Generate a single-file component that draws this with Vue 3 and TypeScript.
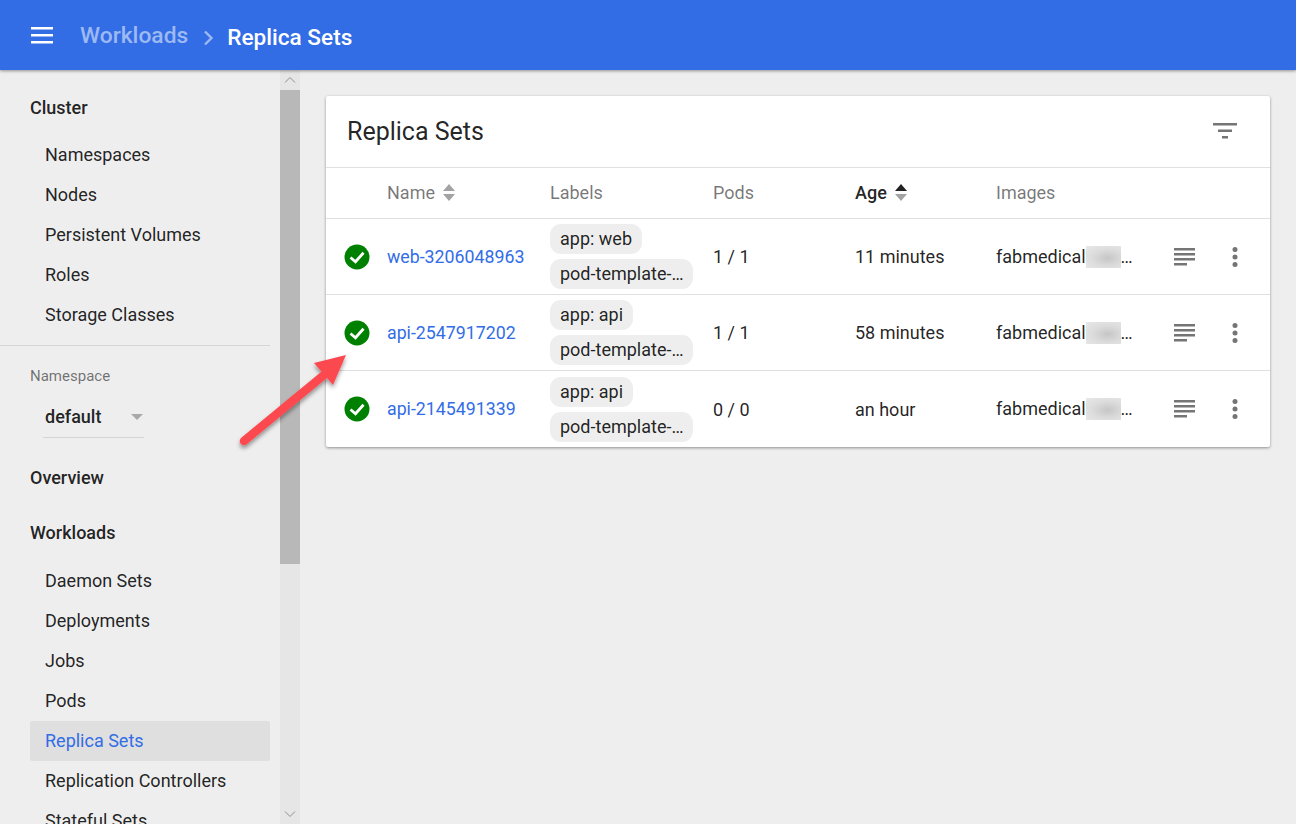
<script setup lang="ts">
interface Row {
  name: string
  labels: string[]
  pods: string
  age: string
}

const clusterItems = ['Namespaces', 'Nodes', 'Persistent Volumes', 'Roles', 'Storage Classes']
const workloadItems = ['Daemon Sets', 'Deployments', 'Jobs', 'Pods', 'Replica Sets', 'Replication Controllers', 'Stateful Sets']

const rows: Row[] = [
  { name: 'web-3206048963', labels: ['app: web', 'pod-template-…'], pods: '1 / 1', age: '11 minutes' },
  { name: 'api-2547917202', labels: ['app: api', 'pod-template-…'], pods: '1 / 1', age: '58 minutes' },
  { name: 'api-2145491339', labels: ['app: api', 'pod-template-…'], pods: '0 / 0', age: 'an hour' },
]
</script>

<template>
  <div class="page">
    <header class="toolbar">
      <svg class="menu" width="24" height="24" viewBox="0 0 24 24"><path d="M1 4h22v2.500H1zM1 11h22v2.500H1zM1 18h22v2.500H1z" fill="#fff" /></svg>
      <span class="crumb">Workloads</span>
      <svg class="chevron" width="14" height="18" viewBox="0 0 14 18"><path d="M3 2.500l6.500 6.500L3 15.500" fill="none" stroke="#9db9f2" stroke-width="2.400" /></svg>
      <span class="current">Replica Sets</span>
    </header>

    <div class="body">
      <aside class="side">
        <nav class="nav">
          <div class="group first">Cluster</div>
          <a v-for="item in clusterItems" :key="item" class="item">{{ item }}</a>
          <div class="rule"></div>
          <div class="ns-label">Namespace</div>
          <div class="ns-select">
            <span>default</span>
            <i class="caret"></i>
          </div>
          <div class="group overview">Overview</div>
          <div class="group workloads">Workloads</div>
          <a v-for="item in workloadItems" :key="item" class="item" :class="{ active: item === 'Replica Sets' }">{{ item }}</a>
        </nav>
        <div class="scrollbar">
          <button class="arrow-btn">
            <svg width="12" height="8" viewBox="0 0 12 8"><path d="M1 6.500l5-5 5 5" fill="none" stroke="#8f8f8f" stroke-width="1" /></svg>
          </button>
          <div class="track"><div class="thumb"></div></div>
          <button class="arrow-btn">
            <svg width="12" height="8" viewBox="0 0 12 8"><path d="M1 1.500l5 5 5-5" fill="none" stroke="#8f8f8f" stroke-width="1" /></svg>
          </button>
        </div>
      </aside>

      <main class="main">
        <section class="card">
          <div class="card-head">
            <h2>Replica Sets</h2>
            <svg class="filter" width="24" height="24" viewBox="0 0 24 24"><path d="M0 3h24v2.500H0zM5 9.500h14V12H5zM9 16h6v2.500H9z" fill="#757575" /></svg>
          </div>

          <div class="grid-row heading">
            <span></span>
            <span class="th">Name <i class="sort"><b></b><b></b></i></span>
            <span class="th">Labels</span>
            <span class="th">Pods</span>
            <span class="th on">Age <i class="sort desc"><b></b><b></b></i></span>
            <span class="th">Images</span>
          </div>

          <div v-for="row in rows" :key="row.name" class="grid-row line">
            <span class="status">
              <svg width="26" height="26" viewBox="0 0 26 26"><circle cx="13" cy="13" r="12.500" fill="#008000" /><path d="M6.500 13.500l5 4.300L19.500 8.800" fill="none" stroke="#fff" stroke-width="2.800" /></svg>
            </span>
            <a class="name">{{ row.name }}</a>
            <span class="chips">
              <span v-for="label in row.labels" :key="label" class="chip">{{ label }}</span>
            </span>
            <span>{{ row.pods }}</span>
            <span>{{ row.age }}</span>
            <span class="image">fabmedical<i class="smudge"></i>…</span>
            <svg class="act" width="22" height="20" viewBox="0 0 22 20"><path d="M0 1h21v2.500H0zM0 6h21v2.500H0zM0 11h21v2.500H0zM0 16h13v2.500H0z" fill="#757575" /></svg>
            <svg class="act" width="6" height="20" viewBox="0 0 6 20"><circle cx="3" cy="2.500" r="2.500" fill="#757575" /><circle cx="3" cy="10" r="2.500" fill="#757575" /><circle cx="3" cy="17.500" r="2.500" fill="#757575" /></svg>
          </div>
        </section>
      </main>
    </div>

    <svg class="pointer" width="130" height="115" viewBox="0 0 130 115">
      <defs>
        <filter id="arrow-shadow" x="-20%" y="-20%" width="140%" height="140%">
          <feDropShadow dx="0" dy="3" stdDeviation="2" flood-color="#000" flood-opacity="0.4" />
        </filter>
      </defs>
      <g filter="url(#arrow-shadow)">
        <path d="M14 101L94 35" stroke="#fb4a50" stroke-width="8.500" stroke-linecap="round" fill="none" />
        <path d="M116 15L84 23L103 45z" fill="#fb4a50" />
      </g>
    </svg>
  </div>
</template>

<style>
html, body {
  margin: 0;
  overflow: hidden;
}
</style>

<style scoped>
.page {
  position: relative;
  width: 1296px;
  height: 824px;
  overflow: hidden;
  background: #eeeeee;
  font-family: Roboto, "Liberation Sans", sans-serif;
  font-size: 18px;
  color: rgba(0, 0, 0, 0.87);
}

.toolbar {
  position: relative;
  z-index: 2;
  height: 70px;
  display: flex;
  align-items: center;
  padding-left: 30px;
  background: #326de6;
  color: #fff;
  box-shadow: 0 1px 3px rgba(0, 0, 0, 0.4);
  box-sizing: border-box;
}

.menu {
  margin-right: 26px;
}

.crumb {
  font-size: 22.800px;
  font-weight: 500;
  color: #9db9f2;
  position: relative;
}

.chevron {
  margin: 6px 11px 0 14px;
}

.current {
  font-size: 22.600px;
  font-weight: 500;
  position: relative;
  top: 2px;
}

.body {
  display: flex;
  height: 754px;
}

.side {
  width: 300px;
  flex: none;
  display: flex;
  overflow: hidden;
}

.nav {
  width: 280px;
  flex: none;
  height: 754px;
  overflow: hidden;
}

.group {
  font-weight: 500;
  padding-left: 30px;
  line-height: 24px;
}

.group.first {
  margin-top: 26px;
  margin-bottom: 15px;
}

.group.overview {
  margin-top: 28px;
}

.group.workloads {
  margin-top: 31px;
  margin-bottom: 16px;
}

.item {
  display: block;
  height: 40px;
  line-height: 40px;
  margin: 0 10px 0 30px;
  padding-left: 15px;
  border-radius: 2px;
}

.item.active {
  background: #dfdfdf;
  color: #326de6;
}

.rule {
  height: 1px;
  margin: 10px 10px 0 0;
  background: #d6d6d6;
}

.ns-label {
  margin: 20px 0 0 30px;
  font-size: 15px;
  line-height: 20px;
  color: rgba(0, 0, 0, 0.54);
}

.ns-select {
  display: flex;
  align-items: center;
  justify-content: space-between;
  width: 101px;
  height: 42px;
  margin: 10px 0 0 43px;
  padding: 0 0 0 2px;
  box-sizing: border-box;
  font-weight: 500;
  border-bottom: 1px solid #d4d4d4;
}

.caret {
  width: 0;
  height: 0;
  margin-right: 1px;
  border-left: 6px solid transparent;
  border-right: 6px solid transparent;
  border-top: 6px solid #a8a8a8;
}

.scrollbar {
  width: 20px;
  flex: none;
  display: flex;
  flex-direction: column;
  background: #e6e6e6;
}

.arrow-btn {
  height: 20px;
  flex: none;
  padding: 0;
  border: 0;
  background: transparent;
  display: flex;
  align-items: center;
  justify-content: center;
}

.track {
  flex: 1;
}

.thumb {
  height: 474px;
  background: #b8b8b8;
}

.main {
  flex: 1;
  min-width: 0;
  padding: 26px 26px 0;
}

.card {
  width: 944px;
  background: #fff;
  border-radius: 2px;
  box-shadow: 0 1px 3px rgba(0, 0, 0, 0.4);
}

.card-head {
  height: 72px;
  display: flex;
  align-items: center;
  justify-content: space-between;
  padding: 0 33px 0 21px;
  box-sizing: border-box;
  border-bottom: 1px solid #e0e0e0;
}

h2 {
  margin: 0;
  font-size: 25px;
  font-weight: 400;
  color: rgba(0, 0, 0, 0.87);
}

.grid-row {
  display: grid;
  grid-template-columns: 61px 163px 163px 142px 141px 164px 50px 50px;
  align-items: center;
  box-sizing: border-box;
  border-bottom: 1px solid #e0e0e0;
}

.heading {
  height: 51px;
  padding-bottom: 2px;
}

.line {
  height: 76px;
}

.line:last-child {
  border-bottom: 0;
}

.th {
  color: rgba(0, 0, 0, 0.54);
  font-weight: 400;
  display: flex;
  align-items: center;
  gap: 8px;
}

.th.on {
  color: rgba(0, 0, 0, 0.87);
  font-weight: 500;
}

.sort {
  display: inline-flex;
  flex-direction: column;
  gap: 3px;
}

.sort b {
  width: 0;
  height: 0;
  border-left: 6.500px solid transparent;
  border-right: 6.500px solid transparent;
  border-bottom: 7px solid #a3a3a3;
}

.sort b + b {
  border-bottom: 0;
  border-top: 7px solid #a3a3a3;
}

.sort.desc b:first-child {
  border-bottom-color: #222;
}

.status {
  display: flex;
  justify-content: center;
}

.name {
  color: #326de6;
  font-size: 17.750px;
}

.chips {
  display: flex;
  flex-direction: column;
  align-items: flex-start;
  gap: 5px;
}

.chip {
  height: 30px;
  line-height: 30px;
  padding: 0 10px;
  border-radius: 11px;
  background: #eeeeee;
}

.image {
  white-space: nowrap;
}

.smudge {
  display: inline-block;
  width: 35px;
  height: 22px;
  vertical-align: -5px;
  background: radial-gradient(ellipse at 62% 55%, #c6c6c6 0%, #dcdcdc 50%, #e8e8e8 100%);
}

.act {
  justify-self: center;
}

.pointer {
  position: absolute;
  left: 230px;
  top: 340px;
}
</style>
